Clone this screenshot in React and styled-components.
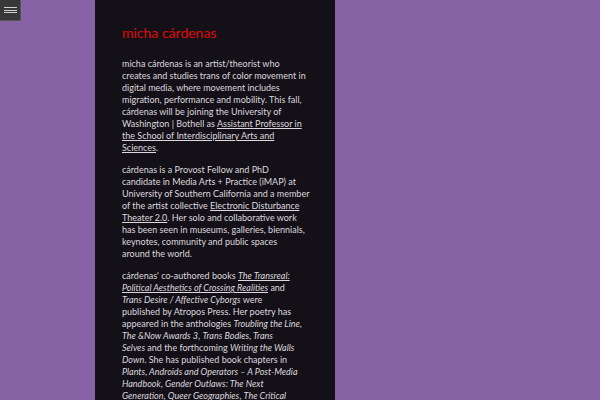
import React from 'react'
import styled, { createGlobalStyle } from 'styled-components'

const GlobalStyle = createGlobalStyle`
  html, body {
    margin: 0;
    padding: 0;
    background: #8763a6;
  }
  body {
    font-family: Lato, "DejaVu Sans", sans-serif;
  }
`

const Page = styled.div`
  display: flex;
  height: 400px;
  overflow: hidden;
`

const MenuButton = styled.button`
  position: fixed;
  top: 0;
  left: 0;
  width: 21px;
  height: 21px;
  padding: 0;
  display: flex;
  flex-direction: column;
  align-items: center;
  justify-content: center;
  gap: 1.5px;
  background: #383838;
  border: none;
  border-right: 1px solid #555;
  border-bottom: 1px solid #555;
  cursor: pointer;
`

const Bar = styled.span`
  display: block;
  width: 13px;
  height: 1px;
  background: #d0d0d0;
`

const Panel = styled.main`
  margin-left: 95px;
  width: 240px;
  box-sizing: border-box;
  padding: 24px 10px 0 27px;
  background: #141017;
  color: #dcd8de;
  font-size: 9px;
  line-height: 12px;
  white-space: nowrap;
`

const Title = styled.h1`
  margin: 0 0 16px;
  font-size: 14px;
  line-height: 18px;
  font-weight: 400;
  color: #e00a0a;
`

const Para = styled.p`
  margin: 0 0 10px;
`

const TextLink = styled.a`
  color: #dcd8de;
  text-decoration: underline;
`

export default function App() {
  return (
    <>
      <GlobalStyle />
      <MenuButton aria-label="menu">
        <Bar />
        <Bar />
        <Bar />
      </MenuButton>
      <Page>
        <Panel>
          <Title>micha cárdenas</Title>
          <Para>
            micha cárdenas is an artist/theorist who<br />
            creates and studies trans of color movement in<br />
            digital media, where movement includes<br />
            migration, performance and mobility. This fall,<br />
            cárdenas will be joining the University of<br />
            Washington | Bothell as{' '}
            <TextLink href="#">
              Assistant Professor in<br />
              the School of Interdisciplinary Arts and<br />
              Sciences
            </TextLink>
            .
          </Para>
          <Para>
            cárdenas is a Provost Fellow and PhD<br />
            candidate in Media Arts + Practice (iMAP) at<br />
            University of Southern California and a member<br />
            of the artist collective{' '}
            <TextLink href="#">
              Electronic Disturbance<br />
              Theater 2.0
            </TextLink>
            . Her solo and collaborative work<br />
            has been seen in museums, galleries, biennials,<br />
            keynotes, community and public spaces<br />
            around the world.
          </Para>
          <Para>
            cárdenas' co-authored books{' '}
            <TextLink href="#">
              <em>
                The Transreal:<br />
                Political Aesthetics of Crossing Realities
              </em>
            </TextLink>{' '}
            and<br />
            <em>Trans Desire / Affective Cyborgs</em> were<br />
            published by Atropos Press. Her poetry has<br />
            appeared in the anthologies <em>Troubling the Line</em>,<br />
            <em>The &amp;Now Awards 3</em>, <em>Trans Bodies, Trans<br />
            Selves</em> and the forthcoming <em>Writing the Walls<br />
            Down</em>. She has published book chapters in<br />
            <em>Plants, Androids and Operators – A Post-Media<br />
            Handbook</em>, <em>Gender Outlaws: The Next<br />
            Generation</em>, <em>Queer Geographies</em>, <em>The Critical<br />
            Digital Studies Reader</em> and others.
          </Para>
        </Panel>
      </Page>
    </>
  )
}
